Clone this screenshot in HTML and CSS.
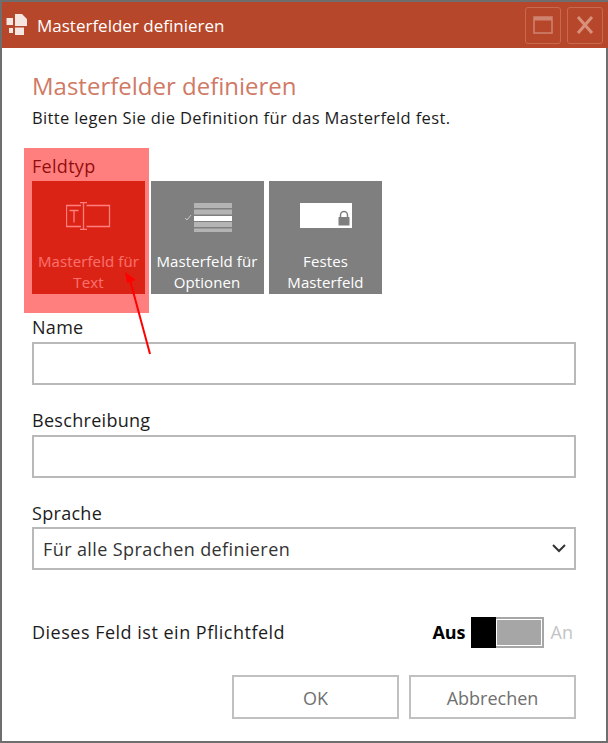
FILE: index.html
```html
<!DOCTYPE html>
<html lang="de">
<head>
<meta charset="utf-8">
<title>Masterfelder definieren</title>
<link rel="stylesheet" href="styles.css">
</head>
<body>
<div class="window">
  <header class="titlebar">
    <svg class="logo" width="24" height="24" viewBox="0 0 24 24">
      <path fill="#f6e6e1" d="M1.500 5h6.500v7H1.500z M10 1h7l5 5v7H10z M4 15h4v5H4z M10 14.500h9V22H10z"/>
    </svg>
    <span class="wintitle">Masterfelder definieren</span>
    <div class="winbtns">
      <span class="winbtn"><svg width="20" height="20" viewBox="0 0 20 20"><path fill="none" stroke="#cf8470" stroke-width="1.500" d="M1 2h18v16H1z"/><path fill="#cf8470" d="M1 2h18v3.500H1z"/></svg></span>
      <span class="winbtn"><svg width="20" height="20" viewBox="0 0 20 20"><path fill="none" stroke="#d9917c" stroke-width="3" d="M3 2l14 16M17 2L3 18"/></svg></span>
    </div>
  </header>
  <main class="content">
    <h1 class="heading">Masterfelder definieren</h1>
    <p class="intro">Bitte legen Sie die Definition für das Masterfeld fest.</p>
    <div class="label first">Feldtyp</div>
    <div class="tiles">
      <div class="tile active">
        <svg class="tile-icon" width="46" height="30" viewBox="0 0 46 30">
          <g fill="none" stroke="#fff" stroke-width="1.300">
            <path d="M15 3.500H.5v21H15M20.500 3.500h23v21h-23"/>
            <path d="M17.500 1v27M14 .7h7M14 27.300h7"/>
            <path d="M3.500 8.500h9M8 8.500v12"/>
          </g>
        </svg>
        <span class="tile-text">Masterfeld für Text</span>
      </div>
      <div class="tile">
        <svg class="tile-icon" width="50" height="30" viewBox="0 0 50 30">
          <path fill="#b4b4b4" d="M12 1h38v5H12zM12 7.500h38v5H12zM12 20h38v5H12zM12 26.500h38v5H12z"/>
          <path fill="#fff" d="M12 14h38v5H12z"/>
          <path fill="none" stroke="#c8c8c8" d="M3 16l2 2 4-5"/>
        </svg>
        <span class="tile-text">Masterfeld für Optionen</span>
      </div>
      <div class="tile">
        <svg class="tile-icon" width="54" height="30" viewBox="0 0 54 30">
          <path fill="#fff" d="M1 1h52v25H1z"/>
          <path fill="none" stroke="#7f7f7f" stroke-width="1.500" d="M41.500 16v-3a3.500 3.500 0 0 1 7 0v3"/>
          <path fill="#7f7f7f" d="M39.500 15h11v8.500h-11z"/>
        </svg>
        <span class="tile-text">Festes Masterfeld</span>
      </div>
    </div>
    <label class="label">Name</label>
    <div class="field"></div>
    <label class="label">Beschreibung</label>
    <div class="field"></div>
    <label class="label">Sprache</label>
    <div class="field select">
      <span>Für alle Sprachen definieren</span>
      <svg width="14" height="9" viewBox="0 0 14 9"><path fill="none" stroke="#333" stroke-width="2" d="M1 1l6 6 6-6"/></svg>
    </div>
    <div class="toggle-row">
      <span>Dieses Feld ist ein Pflichtfeld</span>
      <div class="toggle-wrap">
        <b class="aus">Aus</b>
        <span class="toggle"><span class="knob"></span><span class="track"></span></span>
        <span class="an">An</span>
      </div>
    </div>
    <div class="buttons">
      <span class="btn">OK</span>
      <span class="btn">Abbrechen</span>
    </div>
  </main>
  <div class="highlight"></div>
  <svg class="arrow" width="40" height="100" viewBox="0 0 40 100">
    <path fill="none" stroke="#f00" stroke-width="2" d="M28 89L8 15"/>
    <path fill="#f00" d="M3 7l11 8-9 3z"/>
  </svg>
</div>
</body>
</html>
```
FILE: styles.css
```css
* { box-sizing: border-box; }
html, body { margin: 0; padding: 0; background: #fff; }
body { font-family: "Open Sans", "Noto Sans", sans-serif; color: #1c1c1c; }
.window {
  position: relative;
  width: 608px;
  height: 743px;
  border: 2px solid #6e6e6e;
  background: #fff;
}
.titlebar {
  height: 46px;
  margin-right: -2px;
  background: #b7472a;
  display: flex;
  align-items: center;
  color: #fff;
  padding-left: 3px;
}
.logo { flex: none; }
.wintitle { font-size: 17px; margin-left: 8px; }
.winbtns { margin-left: auto; display: flex; gap: 6px; margin-right: 5px; }
.winbtn {
  width: 36px; height: 37px;
  border: 1px solid #c66a52;
  border-radius: 3px;
  display: flex; align-items: center; justify-content: center;
}
.content { padding: 0 30px; }
.heading {
  margin: 21px 0 0;
  font-size: 24px;
  line-height: 33px;
  font-weight: 400;
  color: #cf7a66;
}
.intro { margin: 5px 0 0; font-size: 16.500px; line-height: 22px; letter-spacing: .36px; color: #1c1c1c; }
.label { display: block; font-size: 18px; line-height: 24px; letter-spacing: .3px; margin-top: 8px; }
.label.first { margin-top: 25px; margin-bottom: 3px; }
.tiles { display: flex; gap: 5.500px; margin-bottom: 21px; }
.tile {
  width: 113px; height: 113px;
  background: #7f7f7f;
  color: #fff;
  display: flex; flex-direction: column; align-items: center;
}
.tile.active { background: #b7472a; }
.tile-icon { flex: none; margin-top: 21px; }
.tile-text {
  margin-top: auto;
  margin-bottom: 1px;
  padding: 0 2px;
  text-align: center;
  font-size: 15px;
  line-height: 21px;
  letter-spacing: .1px;
}
.active .tile-text { color: #f5e0dc; }
.field {
  height: 43px;
  border: 2px solid #b9b9b9;
  margin-bottom: 23px;
  margin-top: 3px;
}
.field + .label + .field + .label { margin-top: 0; }
.select {
  display: flex; align-items: center; justify-content: space-between;
  padding: 0 8px 0 9px;
  font-size: 18px;
  letter-spacing: .4px;
  color: #333;
  margin-bottom: 0;
  margin-top: 2px;
}
.toggle-row {
  display: flex; align-items: center; justify-content: space-between;
  margin-top: 46px;
  font-size: 18px;
  letter-spacing: .5px;
  height: 32px;
}
.toggle-wrap { display: flex; align-items: center; letter-spacing: 0; }
.aus { font-weight: 700; color: #000; }
.toggle { display: flex; width: 73px; height: 31px; margin: 0 7px 0 5px; border: 2px solid #a6a6a6; border-left: 0; }
.knob { width: 25px; background: #000; margin: -2px 0; }
.track { flex: 1; background: #a6a6a6; border: 1px solid #fff; }
.an { color: #c4c4c4; margin-right: 3px; }
.buttons { display: flex; justify-content: flex-end; gap: 10px; margin-top: 27px; }
.btn {
  width: 167px; height: 44px;
  border: 2px solid #c0c0c0;
  display: flex; align-items: center; justify-content: center;
  padding-top: 2px;
  font-size: 18px;
  color: #707070;
}
.highlight {
  position: absolute;
  left: 22px; top: 146px;
  width: 125px; height: 165px;
  background: rgba(255, 0, 0, .5);
}
.arrow { position: absolute; left: 120px; top: 263px; }
```
